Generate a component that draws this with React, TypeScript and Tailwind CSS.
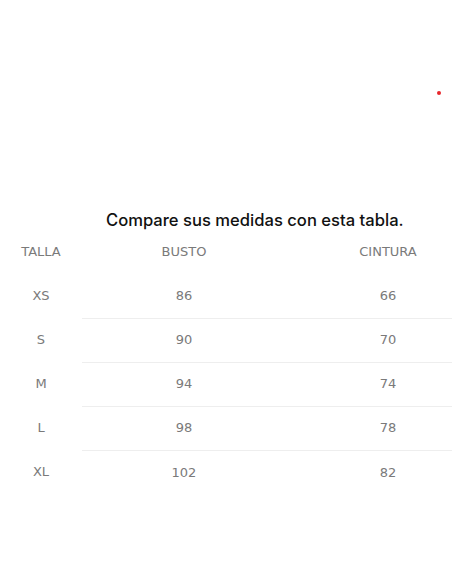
const rows = [
  { size: "XS", bust: "86", waist: "66" },
  { size: "S", bust: "90", waist: "70" },
  { size: "M", bust: "94", waist: "74" },
  { size: "L", bust: "98", waist: "78" },
  { size: "XL", bust: "102", waist: "82" },
];

export default function App() {
  return (
    <div
      className="h-[584px] w-[452px] overflow-hidden bg-white"
      style={{ fontFamily: '"DejaVu Sans", sans-serif' }}
    >
      <div className="flex h-[210px] justify-end pr-[11px] pt-[91px]">
        <span className="h-[4px] w-[4px] rounded-full bg-[#e8262b]" />
      </div>
      <h2
        className="pl-[106px] text-[16.6px] leading-[20px] font-medium whitespace-nowrap text-[#111]"
        style={{ fontFamily: "Inter, sans-serif" }}
      >
        Compare sus medidas con esta tabla.
      </h2>
      <table className="w-[490px] table-fixed border-collapse text-[13px] text-[#7a7a7a]">
        <colgroup>
          <col className="w-[82px]" />
          <col className="w-[204px]" />
          <col className="w-[204px]" />
        </colgroup>
        <thead>
          <tr className="h-[44px]">
            <th className="font-normal">TALLA</th>
            <th className="font-normal">BUSTO</th>
            <th className="font-normal">CINTURA</th>
          </tr>
        </thead>
        <tbody>
          {rows.map((r, i) => {
            const line = i < rows.length - 1 ? "border-b border-[#eeeeee]" : "";
            return (
              <tr key={r.size} className="h-[44px]">
                <th className="font-normal">{r.size}</th>
                <td className={`text-center ${line}`}>{r.bust}</td>
                <td className={`text-center ${line}`}>{r.waist}</td>
              </tr>
            );
          })}
        </tbody>
      </table>
    </div>
  );
}
